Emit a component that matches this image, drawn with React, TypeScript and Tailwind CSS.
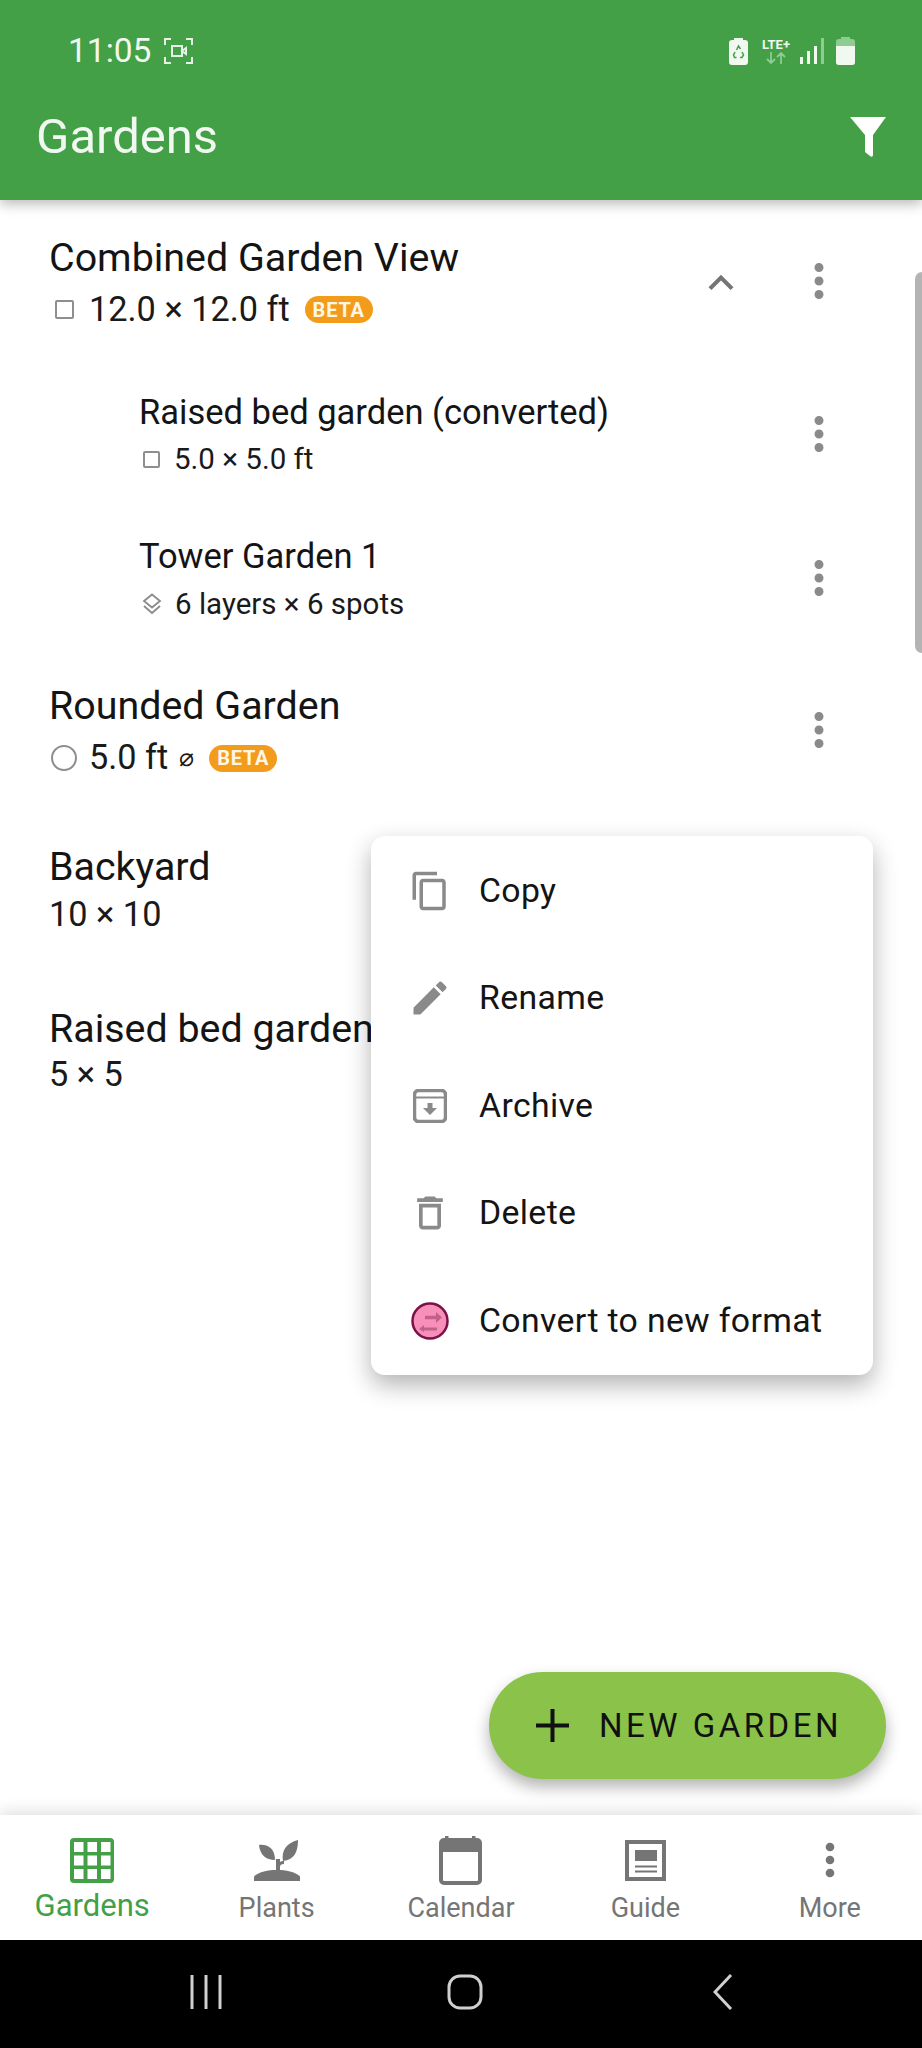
import type { ReactNode } from "react";
import { MdEdit, MdExpandLess, MdMoreVert, MdOutlineContentCopy, MdOutlineDelete } from "react-icons/md";

function ShapeSquare({ small }: { small?: boolean }) {
  return small ? (
    <span className="mr-[14px] ml-[4px] h-[17px] w-[17px] shrink-0 rounded-[2px] border-2 border-[#8e8e8e]" />
  ) : (
    <span className="mr-[15px] ml-[6px] h-[19px] w-[19px] shrink-0 rounded-[2px] border-2 border-[#8e8e8e]" />
  );
}

function ShapeCircle() {
  return <span className="mr-[12px] ml-[2px] h-[26px] w-[26px] shrink-0 rounded-full border-2 border-[#8e8e8e]" />;
}

function Layers() {
  return (
    <svg width="20" height="22" viewBox="0 0 20 22" className="mr-[13px] ml-[3px] shrink-0" fill="none" stroke="#8a8a8a" strokeWidth="1.8">
      <path d="M10 1.5 18 8l-8 6.5L2 8z" />
      <path d="M2 13l8 7 8-7" />
    </svg>
  );
}

function Beta() {
  return (
    <span className="flex h-[27px] w-[68px] shrink-0 items-center justify-center rounded-full bg-[#f39c1b] text-[20px] font-bold tracking-[0.8px] text-[#fff6e6]">
      BETA
    </span>
  );
}

function RowMenu() {
  return (
    <div className="flex h-[50px] w-[48px] items-center justify-center pb-[4px]">
      <MdMoreVert size={54} color="#8a8a8a" className="shrink-0" />
    </div>
  );
}

type RowProps = {
  title: string;
  sub: ReactNode;
  className: string;
  titleClass: string;
  subClass: string;
  chevron?: boolean;
  menu?: boolean;
};

function GardenRow({ title, sub, className, titleClass, subClass, chevron, menu = true }: RowProps) {
  return (
    <div className={`flex items-center pr-[79px] ${className}`}>
      <div className="min-w-0 flex-1">
        <div className={`flex items-center whitespace-nowrap text-[#141414] ${titleClass}`}>{title}</div>
        <div className={`flex items-center whitespace-nowrap text-[#1a1a1a] ${subClass}`}>{sub}</div>
      </div>
      {chevron ? (
        <div className="mr-[50px] flex w-[48px] justify-center">
          <MdExpandLess size={50} color="#757575" className="shrink-0" />
        </div>
      ) : null}
      {menu ? <RowMenu /> : null}
    </div>
  );
}

function MenuItem({ icon, label }: { icon: ReactNode; label: string }) {
  return (
    <div className="flex h-[107.5px] items-center pl-[37px]">
      <div className="flex w-[44px] justify-center">{icon}</div>
      <span className="mt-[1px] ml-[27px] text-[33.8px] tracking-[0.35px] text-[#141414]">{label}</span>
    </div>
  );
}

function ArchiveIcon() {
  return (
    <svg width="34" height="34" viewBox="0 0 34 34" fill="none">
      <rect x="1.5" y="1.5" width="31" height="31" rx="4" stroke="#8a8a8a" strokeWidth="3.5" />
      <path d="M2 8.5h30" stroke="#8a8a8a" strokeWidth="2" />
      <path d="M14.500 14h5v5h4.500L17 26l-7-7h4.500z" fill="#8a8a8a" />
    </svg>
  );
}

function ConvertIcon() {
  return (
    <svg width="38" height="38" viewBox="0 0 38 38" fill="none">
      <circle cx="19" cy="19" r="17.5" fill="#f78fb8" stroke="#7a1248" strokeWidth="2.5" />
      <path d="M14 15.500h14" stroke="#c2608c" strokeWidth="3.500" />
      <path d="M25 10l6 5.500-6 5.500z" fill="#c2608c" />
      <path d="M26 27H12" stroke="#c2608c" strokeWidth="3" />
      <path d="M13 23l-5 4 5 3z" fill="#c2608c" />
    </svg>
  );
}

function GridIcon() {
  return (
    <svg width="44" height="45" viewBox="0 0 44 45">
      <rect width="44" height="45" rx="4" fill="#43a047" />
      {[4, 17.5, 31].map((x) =>
        [4, 17.5, 31].map((y) => <rect key={`${x}-${y}`} x={x} y={y} width="9.5" height="10" fill="#fff" />),
      )}
    </svg>
  );
}

function PlantIcon() {
  return (
    <svg width="46" height="41" viewBox="0 0 46 41" fill="#757575">
      <path d="M0 41v-4.500C5 31.500 14 30 23 30s18 1.500 23 6.500V41z" />
      <path d="M22 31V19h4v3c1-1 2-1 4-1v3c-3 0-4 1-4 3v4z" />
      <path d="M5 5c8-1 16 3 16 15C12 20 6 15 5 5z" />
      <path d="M44 0c0 12-4 20-15 21-2-11 4-18 15-21z" />
    </svg>
  );
}

function CalendarIcon() {
  return (
    <svg width="43" height="49" viewBox="0 0 43 49" fill="none">
      <rect x="2" y="4" width="39" height="43" rx="3" stroke="#757575" strokeWidth="4" />
      <rect x="1" y="3" width="41" height="13" rx="3" fill="#757575" />
      <rect x="6" y="0" width="3.500" height="6" fill="#757575" />
      <rect x="33" y="0" width="3.500" height="6" fill="#757575" />
    </svg>
  );
}

function GuideIcon() {
  return (
    <svg width="41" height="41" viewBox="0 0 41 41" fill="none">
      <rect x="2" y="2" width="37" height="37" stroke="#757575" strokeWidth="4" />
      <rect x="10" y="10" width="22" height="11" fill="#757575" />
      <path d="M10 26.500h22M10 31.500h22" stroke="#757575" strokeWidth="2" />
    </svg>
  );
}

function NavItem({ icon, label, active }: { icon: ReactNode; label: string; active?: boolean }) {
  return (
    <div className="flex flex-col items-center">
      <div className="flex h-[50px] items-center justify-center">{icon}</div>
      <span className={active ? "mt-[1px] text-[31px] leading-[40px] text-[#43a047]" : "mt-[4px] text-[27px] leading-[38px] text-[#757575]"}>
        {label}
      </span>
    </div>
  );
}

function StatusIcons() {
  return (
    <div className="flex items-center">
      <svg width="19" height="27" viewBox="0 0 19 27" fill="#f0f8ef">
        <rect x="5" width="9" height="3" />
        <rect y="2" width="19" height="25" rx="3" />
        <path d="M7.500 12 9.500 8l2 3M13 14l1.500 3-1.500 2.500h-2M7.500 19.500H5.500L4.500 17l1.500-3" fill="none" stroke="#43a047" strokeWidth="1.500" />
      </svg>
      <div className="ml-[12px] flex w-[32px] flex-col items-center">
        <span className="text-[13px] leading-[14px] font-bold text-[#f0f8ef]">LTE+</span>
        <svg width="20" height="12" viewBox="0 0 20 12" fill="none" stroke="#8fcb92" strokeWidth="1.800">
          <path d="M5 0v11M1 7l4 4 4-4M15 12V1M11 5l4-4 4 4" />
        </svg>
      </div>
      <svg width="24" height="26" viewBox="0 0 24 26" className="ml-[8px]">
        <rect x="0" y="19" width="3" height="7" fill="#f0f8ef" />
        <rect x="7" y="13" width="3" height="13" fill="#f0f8ef" />
        <rect x="14" y="8" width="3" height="18" fill="#f0f8ef" />
        <rect x="21" y="0" width="3" height="26" fill="#8fcb92" />
      </svg>
      <svg width="19" height="28" viewBox="0 0 19 28" className="ml-[12px]">
        <rect x="5" width="9" height="3" fill="#8fcb92" />
        <rect y="2" width="19" height="26" rx="3" fill="#8fcb92" />
        <path d="M0 9h19v16a3 3 0 0 1-3 3H3a3 3 0 0 1-3-3z" fill="#f0f8ef" />
      </svg>
    </div>
  );
}

export default function App() {
  return (
    <div className="relative flex h-[2048px] w-[922px] flex-col overflow-hidden bg-white font-['Roboto',sans-serif]">
      <header className="relative z-10 h-[200px] shrink-0 bg-[#43a047] shadow-[0_4px_12px_rgba(0,0,0,0.28)]">
        <div className="flex h-[102px] items-center justify-between pr-[67px] pl-[68px]">
          <div className="flex items-center">
            <span className="text-[33.5px] text-[#f0f8ef]">11:05</span>
            <svg width="29" height="26" viewBox="0 0 29 26" fill="none" stroke="#e5f2e5" strokeWidth="2" className="ml-[13px]">
              <path d="M1 7V1h6M22 1h6v6M28 19v6h-6M7 25H1v-6" />
              <rect x="8" y="8" width="10" height="10" />
              <path d="M18 13l4-3v6z" />
            </svg>
          </div>
          <StatusIcons />
        </div>
        <div className="flex h-[70px] items-center justify-between pr-[36px] pl-[36px]">
          <h1 className="text-[49px] text-[#f1f8f1]">Gardens</h1>
          <svg width="36" height="40" viewBox="0 0 36 40" fill="#fff">
            <path d="M0 0h36L23 18v20c0 2-2 2-3 1l-5-4V18z" />
          </svg>
        </div>
      </header>

      <main className="relative min-h-0 flex-1 pt-[31px] pl-[49px]">
        <GardenRow
          title="Combined Garden View"
          chevron
          className="h-[104px]"
          titleClass="h-[53px] text-[39.4px]"
          subClass="h-[51px] text-[34.3px]"
          sub={
            <>
              <ShapeSquare />
              12.0 × 12.0 ft
              <span className="ml-[15px]">
                <Beta />
              </span>
            </>
          }
        />
        <GardenRow
          title="Raised bed garden (converted)"
          className="mt-[55px] h-[92px] pl-[90px]"
          titleClass="h-[46px] text-[34.5px]"
          subClass="h-[46px] text-[29.5px]"
          sub={
            <>
              <ShapeSquare small />
              5.0 × 5.0 ft
            </>
          }
        />
        <GardenRow
          title="Tower Garden 1"
          className="mt-[50px] h-[96px] pl-[90px]"
          titleClass="h-[48px] text-[34.5px]"
          subClass="h-[47px] text-[29.5px]"
          sub={
            <>
              <Layers />
              6 layers × 6 spots
            </>
          }
        />
        <GardenRow
          title="Rounded Garden"
          className="mt-[51px] h-[105px]"
          titleClass="h-[53px] text-[39.4px]"
          subClass="h-[52px] text-[34.3px]"
          sub={
            <>
              <ShapeCircle />
              5.0 ft
              <span className="mr-[15px] ml-[11px] text-[25px]">⌀</span>
              <Beta />
            </>
          }
        />
        <GardenRow
          title="Backyard"
          menu={false}
          className="mt-[59px] h-[95px]"
          titleClass="h-[48px] text-[39.4px]"
          subClass="h-[47px] text-[34.3px]"
          sub="10 × 10"
        />
        <GardenRow
          title="Raised bed garden"
          menu={false}
          className="mt-[68px] h-[92px]"
          titleClass="h-[46px] text-[39.4px]"
          subClass="h-[46px] text-[34.3px]"
          sub="5 × 5"
        />

        <div className="absolute top-[72px] right-0 h-[381px] w-[7px] rounded-l-[7px] bg-[#b4b4b4]" />

        <div className="absolute top-[636px] left-[371px] flex h-[539px] w-[502px] flex-col justify-center rounded-[14px] bg-white shadow-[0_10px_24px_rgba(0,0,0,0.3)]">
          <MenuItem label="Copy" icon={<MdOutlineContentCopy size={42} color="#8a8a8a" />} />
          <MenuItem label="Rename" icon={<MdEdit size={44} color="#8a8a8a" />} />
          <MenuItem label="Archive" icon={<ArchiveIcon />} />
          <MenuItem label="Delete" icon={<MdOutlineDelete size={46} color="#8a8a8a" />} />
          <MenuItem label="Convert to new format" icon={<ConvertIcon />} />
        </div>

        <button className="absolute top-[1472px] left-[489px] flex h-[107px] w-[397px] items-center rounded-full bg-[#8bc34a] pl-[47px] shadow-[0_8px_16px_rgba(0,0,0,0.3)]">
          <svg width="33" height="33" viewBox="0 0 33 33" fill="#111">
            <path d="M14.500 0h4v14.500H33v4H18.500V33h-4V18.500H0v-4h14.500z" />
          </svg>
          <span className="ml-[30px] text-[33px] tracking-[3.5px] text-[#111]">NEW GARDEN</span>
        </button>
      </main>

      <nav className="relative grid h-[125px] shrink-0 grid-cols-5 bg-white pt-[20px] shadow-[0_-4px_14px_rgba(0,0,0,0.12)]">
        <NavItem active label="Gardens" icon={<GridIcon />} />
        <NavItem label="Plants" icon={<PlantIcon />} />
        <NavItem label="Calendar" icon={<CalendarIcon />} />
        <NavItem label="Guide" icon={<GuideIcon />} />
        <NavItem label="More" icon={<MdMoreVert size={52} color="#757575" className="shrink-0" />} />
      </nav>

      <div className="flex h-[108px] shrink-0 items-center bg-black pb-[4px] pl-[190px]">
        <svg width="32" height="34" viewBox="0 0 32 34" stroke="#cfcfcf" strokeWidth="3">
          <path d="M2 0v34M16 0v34M30 0v34" />
        </svg>
        <svg width="36" height="36" viewBox="0 0 36 36" fill="none" stroke="#cfcfcf" strokeWidth="3" className="ml-[225px]">
          <rect x="2" y="2" width="32" height="32" rx="11" />
        </svg>
        <svg width="20" height="36" viewBox="0 0 20 36" fill="none" stroke="#cfcfcf" strokeWidth="3" className="ml-[230px]">
          <path d="M18 1 2 18l16 17" />
        </svg>
      </div>
    </div>
  );
}
